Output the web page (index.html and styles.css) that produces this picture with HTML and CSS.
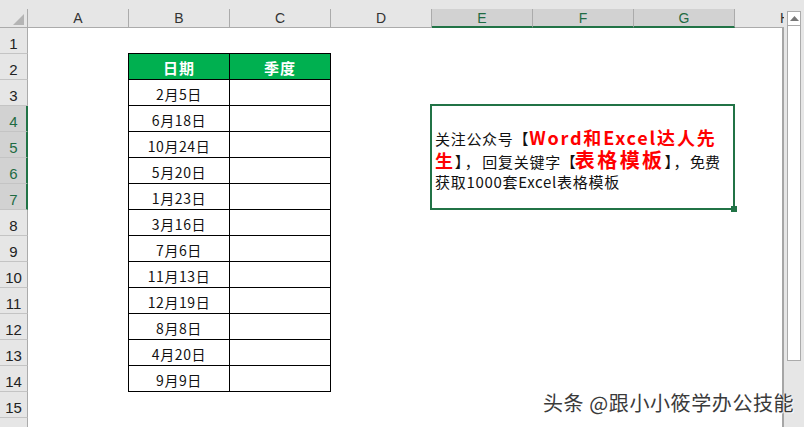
FILE: index.html
```html
<!DOCTYPE html>
<html>
<head>
<meta charset="utf-8">
<link rel="stylesheet" href="styles.css">
</head>
<body>
<div class="app">
  <div class="sheet">
    <div class="colheads">
      <div class="corner"><svg width="11" height="11" viewBox="0 0 11 11"><polygon points="11,0 11,11 0,11" fill="#b4b4b4"/></svg></div>
      <div class="ch">A</div>
      <div class="ch">B</div>
      <div class="ch">C</div>
      <div class="ch">D</div>
      <div class="ch sel">E</div>
      <div class="ch sel">F</div>
      <div class="ch sel">G</div>
      <div class="ch">H</div>
    </div>
    <div class="body">
      <div class="rowheads">
        <div class="rh">1</div>
        <div class="rh">2</div>
        <div class="rh">3</div>
        <div class="rh sel">4</div>
        <div class="rh sel">5</div>
        <div class="rh sel">6</div>
        <div class="rh sel">7</div>
        <div class="rh">8</div>
        <div class="rh">9</div>
        <div class="rh">10</div>
        <div class="rh">11</div>
        <div class="rh">12</div>
        <div class="rh">13</div>
        <div class="rh">14</div>
        <div class="rh">15</div>
        <div class="rh">16</div>
      </div>
      <div class="canvas">
        <div class="data">
          <div class="th">日期</div><div class="th">季度</div>
          <div class="td">2月5日</div><div class="td"></div>
          <div class="td">6月18日</div><div class="td"></div>
          <div class="td">10月24日</div><div class="td"></div>
          <div class="td">5月20日</div><div class="td"></div>
          <div class="td">1月23日</div><div class="td"></div>
          <div class="td">3月16日</div><div class="td"></div>
          <div class="td">7月6日</div><div class="td"></div>
          <div class="td">11月13日</div><div class="td"></div>
          <div class="td">12月19日</div><div class="td"></div>
          <div class="td">8月8日</div><div class="td"></div>
          <div class="td">4月20日</div><div class="td"></div>
          <div class="td">9月9日</div><div class="td"></div>
        </div>
        <div class="shape">
          <div class="line l1">关注公众号【<span class="red r1">Word和Excel达人先</span></div>
          <div class="line l2"><span class="red r1">生</span><span class="pa">】，</span>回复关键字<span class="pb">【</span><span class="red r2">表格模板</span><span class="pc">】，</span><span class="pd">免费</span></div>
          <div class="line l3">获取1000套Excel表格模板</div>
          <span class="handle"></span>
        </div>
      </div>
    </div>
  </div>
  <div class="vscroll">
    <div class="vtrack">
      <div class="vbtn"><svg width="9" height="5" viewBox="0 0 9 5"><polygon points="0,5 4.5,0 9,5" fill="#777"/></svg></div>
    </div>
  </div>
  <div class="watermark">头条 @跟小小筱学办公技能</div>
</div>
</body>
</html>
```

FILE: styles.css
```css
html, body {
  margin: 0;
  padding: 0;
}
body {
  width: 804px;
  height: 427px;
  overflow: hidden;
  background: #e6e6e6;
  font-family: "Liberation Sans", Arial, sans-serif;
}
.app {
  position: relative;
  display: flex;
  width: 804px;
  height: 427px;
}
.sheet {
  flex: none;
  width: 784px;
  height: 427px;
  overflow: hidden;
  display: flex;
  flex-direction: column;
}
.colheads {
  flex: none;
  display: flex;
  height: 28px;
  background: #e6e6e6;
}
.corner {
  flex: none;
  box-sizing: border-box;
  width: 28px;
  height: 19px;
  margin-top: 9px;
  border-right: 1px solid #ababab;
  border-bottom: 1px solid #ababab;
  display: flex;
  justify-content: flex-end;
  align-items: flex-end;
  padding: 0 3px 2px 0;
}
.corner svg { display: block; }
.ch {
  flex: none;
  box-sizing: border-box;
  width: 101px;
  height: 19px;
  margin-top: 9px;
  border-right: 1px solid #ababab;
  border-bottom: 1px solid #ababab;
  display: flex;
  justify-content: center;
  align-items: flex-end;
  font-size: 14px;
  line-height: 16px;
  color: #333;
  padding-bottom: 1px;
}
.ch.sel {
  background: #d2d2d2;
  border-bottom: 2px solid #217346;
  color: #1f6b43;
  padding-bottom: 0;
}
.body {
  flex: 1;
  display: flex;
  min-height: 0;
}
.rowheads {
  flex: none;
  width: 28px;
  display: flex;
  flex-direction: column;
}
.rh {
  flex: none;
  box-sizing: border-box;
  width: 28px;
  height: 26px;
  border-right: 1px solid #ababab;
  border-bottom: 1px solid #c4c4c4;
  display: flex;
  justify-content: center;
  align-items: flex-end;
  font-size: 15px;
  line-height: 17px;
  color: #222;
  padding-bottom: 1px;
}
.rh.sel {
  background: #d2d2d2;
  border-right: 2px solid #217346;
  color: #1f6b43;
  padding-left: 1px;
}
.canvas {
  position: relative;
  flex: 1;
  background: #fff;
  border-right: 2px solid #a6a6a6;
}
.data {
  display: grid;
  grid-template-columns: 101px 101px;
  grid-auto-rows: 26px;
  width: 202px;
  margin: 25px 0 0 100px;
  border-left: 1px solid #000;
  border-top: 1px solid #000;
  font-family: "Noto Sans CJK SC", "Liberation Sans", sans-serif;
}
.th, .td {
  box-sizing: border-box;
  border-right: 1px solid #000;
  border-bottom: 1px solid #000;
  display: flex;
  justify-content: center;
  align-items: center;
  padding-top: 3px;
  line-height: 20px;
}
.th {
  background: #00b050;
  color: #fff;
  font-weight: bold;
  font-size: 15px;
  letter-spacing: 1px;
}
.td {
  font-size: 14px;
  color: #111;
  letter-spacing: 0.6px;
}
.shape {
  position: absolute;
  left: 402px;
  top: 76px;
  box-sizing: border-box;
  width: 305px;
  height: 106px;
  border: 2px solid #217346;
  padding: 19px 0 0 3px;
  font-family: "Noto Sans CJK SC", "Liberation Sans", sans-serif;
  font-size: 15px;
  color: #111;
}
.line {
  white-space: nowrap;
  letter-spacing: 0.7px;
}
.l1 { height: 24px; line-height: 24px; }
.l2 { height: 22px; line-height: 22px; }
.l3 { height: 22px; line-height: 22px; }
.red {
  color: #ff0000;
  font-weight: bold;
}
.r1 {
  font-size: 18px;
  letter-spacing: 1.8px;
}
.r2 {
  font-size: 20px;
  letter-spacing: 2.4px;
}
.pa { letter-spacing: 2.5px; }
.pb { letter-spacing: -1px; }
.pc { letter-spacing: 1.5px; }
.pd { letter-spacing: 0; }
.handle {
  position: absolute;
  right: -4px;
  bottom: -4px;
  width: 6px;
  height: 6px;
  background: #217346;
}
.vscroll {
  flex: none;
  width: 20px;
  height: 427px;
  box-sizing: border-box;
  padding: 11px 3px 0 3px;
  background: #e6e6e6;
}
.vtrack {
  box-sizing: border-box;
  height: 350px;
  border: 1px solid #ababab;
  background: #fff;
}
.vbtn {
  height: 13px;
  border-bottom: 1px solid #ababab;
  display: flex;
  justify-content: center;
  align-items: center;
}
.vbtn svg { display: block; }
.watermark {
  position: absolute;
  left: 543px;
  top: 389px;
  font-family: "Noto Sans CJK SC", sans-serif;
  font-size: 20px;
  line-height: 28px;
  letter-spacing: 0.6px;
  color: #3a3a3a;
  white-space: nowrap;
  text-shadow: 1px 1px 1px rgba(255,255,255,0.9), -1px 0 1px rgba(255,255,255,0.6);
}
```
